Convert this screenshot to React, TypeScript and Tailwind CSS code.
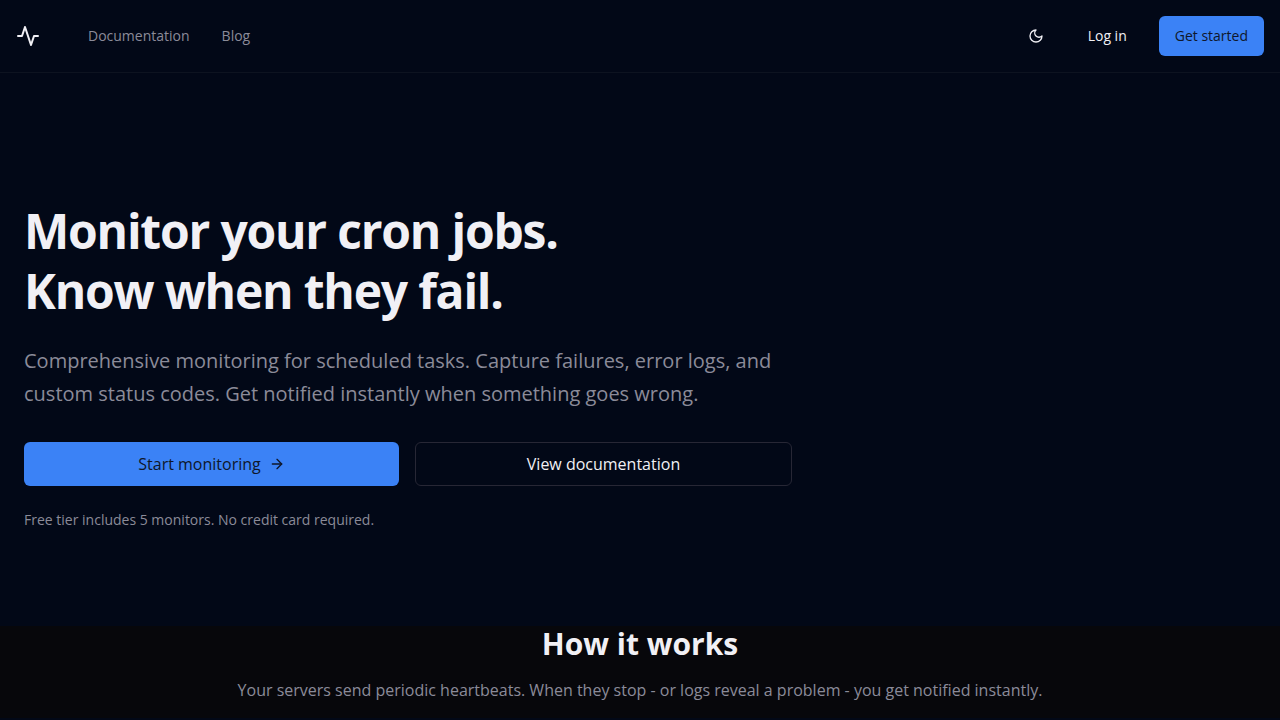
import { ReactNode } from "react";
import { ArrowRight } from "lucide-react";

type LinkProps = {
  href: string;
  children: ReactNode;
};

type IconProps = {
  d: string;
  className: string;
};

const Icon = ({ d, className }: IconProps) => (
  <svg
    viewBox="0 0 24 24"
    fill="none"
    stroke="currentColor"
    strokeWidth="2"
    strokeLinecap="round"
    strokeLinejoin="round"
    aria-hidden="true"
    className={className}
  >
    <path d={d} />
  </svg>
);

const NavLink = ({ href, children }: LinkProps) => (
  <a href={href} className="text-sm text-[#8b8b99] hover:text-[#f1f0f5]">
    {children}
  </a>
);

const Header = () => (
  <header className="border-b border-[#0d1320]">
    <div className="flex h-18 items-center justify-between px-4">
      <div className="flex items-center gap-12">
        <a href="/" aria-label="Home">
          <Icon d="M22 12h-4l-3 9L9 3l-3 9H2" className="size-6" />
        </a>
        <nav className="flex gap-8">
          <NavLink href="/docs">Documentation</NavLink>
          <NavLink href="/blog">Blog</NavLink>
        </nav>
      </div>
      <div className="flex items-center gap-4">
        <button
          type="button"
          aria-label="Toggle theme"
          className="flex size-10 items-center justify-center rounded-md"
        >
          <Icon d="M12 3a6 6 0 0 0 9 9 9 9 0 1 1-9-9Z" className="size-4" />
        </button>
        <a
          href="/login"
          className="flex h-10 items-center rounded-md px-4 text-sm"
        >
          Log in
        </a>
        <a
          href="/register"
          className="flex h-10 items-center rounded-md bg-[#3b82f6] px-4 text-sm text-[#0f172a]"
        >
          Get started
        </a>
      </div>
    </div>
  </header>
);

const Hero = () => (
  <section className="px-6 pt-32 pb-24">
    <div className="max-w-3xl">
      <h1 className="text-5xl leading-tight font-bold tracking-tight">
        Monitor your cron jobs.
        <br />
        Know when they fail.
      </h1>
      <p className="mt-6 text-xl leading-relaxed text-[#8b8b99]">
        Comprehensive monitoring for scheduled tasks. Capture failures, error
        logs, and custom status codes. Get notified instantly when something
        goes wrong.
      </p>
      <div className="mt-8 flex gap-4">
        <a
          href="/register"
          className="flex h-11 flex-1 items-center justify-center gap-2 rounded-md bg-[#3b82f6] px-8 text-[#0f172a]"
        >
          Start monitoring
          <ArrowRight className="size-4" />
        </a>
        <a
          href="/docs"
          className="flex h-11 flex-1 items-center justify-center rounded-md border border-[#272735] px-8"
        >
          View documentation
        </a>
      </div>
      <p className="mt-6 text-sm text-[#8b8b99]">
        Free tier includes 5 monitors. No credit card required.
      </p>
    </div>
  </section>
);

const HowItWorks = () => (
  <section className="bg-[#07070b] px-6 pb-4 text-center">
    <h2 className="text-3xl font-bold">How it works</h2>
    <p className="mt-4 text-[#8b8b99]">
      Your servers send periodic heartbeats. When they stop - or logs reveal a
      problem - you get notified instantly.
    </p>
  </section>
);

export default function App() {
  return (
    <div className="min-h-screen bg-[#020817] font-['Open_Sans',sans-serif] text-[#f1f0f5]">
      <Header />
      <main>
        <Hero />
        <HowItWorks />
      </main>
    </div>
  );
}
